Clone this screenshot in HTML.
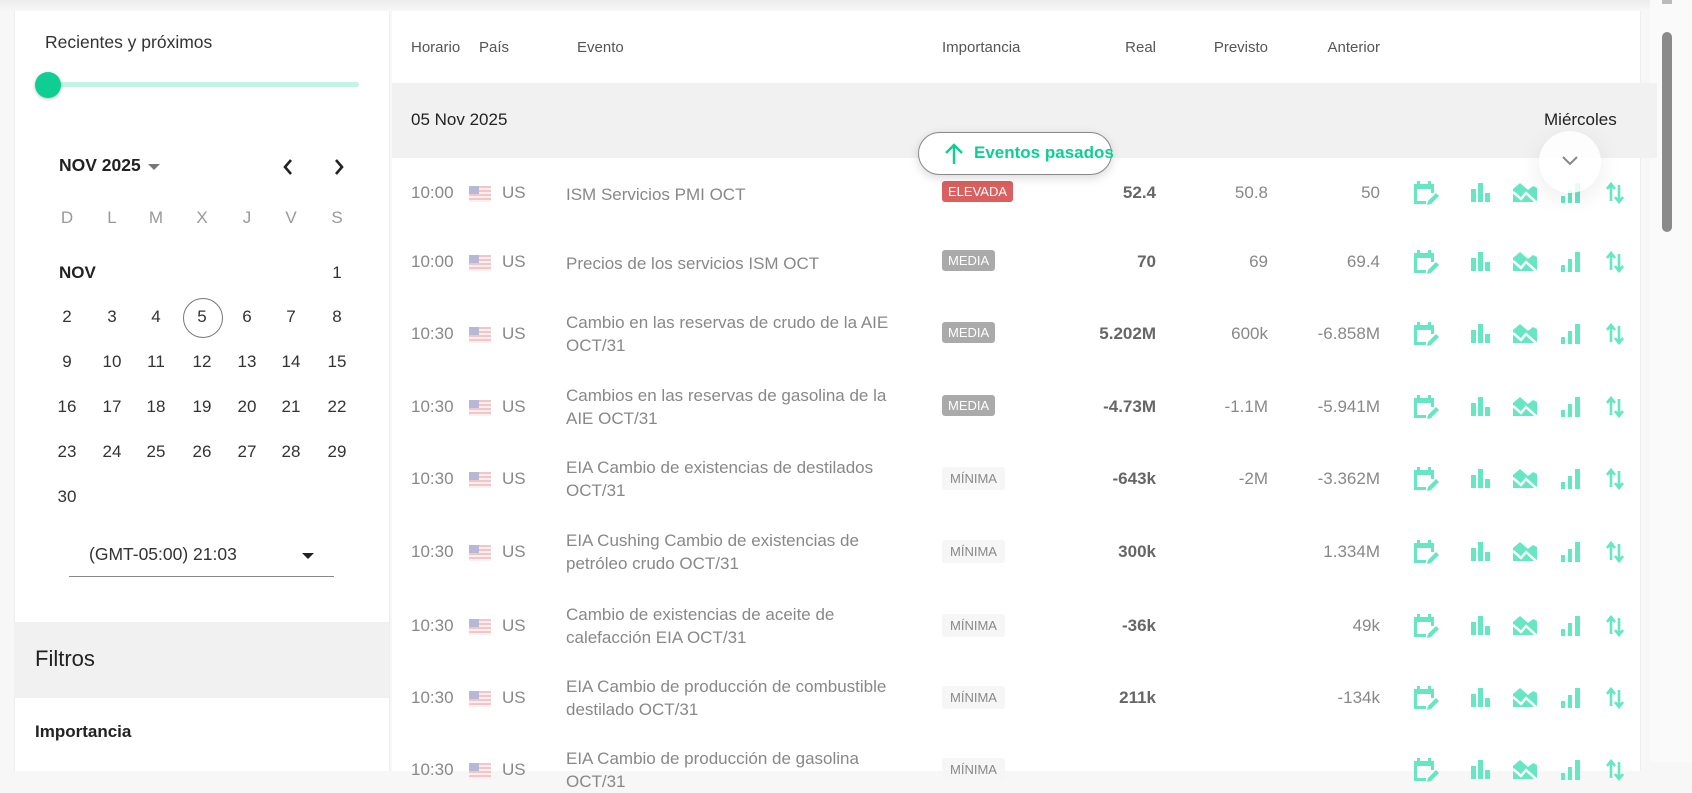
<!DOCTYPE html>
<html><head><meta charset="utf-8"><style>
*{margin:0;padding:0;box-sizing:border-box}
body{width:1692px;height:762px;overflow:hidden;background:#f7f7f7;font-family:"Liberation Sans",sans-serif;color:#333;position:relative}
.a{position:absolute;white-space:nowrap}
#left{position:absolute;left:14px;top:11px;width:376px;height:760px;background:#fff;border-left:1px solid #eee;border-right:1px solid #eee}
#main{position:absolute;left:392px;top:11px;width:1249px;height:760px;background:#fff;border-right:1px solid #eee}
.cal{font-size:17px;color:#333;width:40px;text-align:center}
.dh{color:#999}
.g{color:#888;font-size:17px}
.hd{font-size:15px;color:#555}
.badge{position:absolute;font-size:13px;padding:3px 6px;border-radius:3px;color:#fff;left:942px}
.r{text-align:right}
.ic{position:absolute}
</style></head><body>
<div class="a" style="left:0;top:0;width:1692px;height:11px;background:linear-gradient(#ececec,#f7f7f7)"></div>
<div id="left"></div>
<div id="main"></div>
<div class="a" style="left:1650px;top:0;width:42px;height:762px;background:#fafafa"></div>
<div class="a" style="left:1662px;top:32px;width:10px;height:200px;background:#8a8a8a;border-radius:5px"></div>
<div class="a" style="left:1662px;top:0;width:10px;height:4px;background:#bbb"></div>

<div class="a" style="left:45px;top:32px;font-size:17.5px;color:#333">Recientes y próximos</div>
<div class="a" style="left:47px;top:82px;width:312px;height:5px;background:#c3f3e5;border-radius:3px"></div>
<div class="a" style="left:35px;top:72px;width:26px;height:26px;border-radius:50%;background:#0fce94;box-shadow:0 1px 3px rgba(0,0,0,.25)"></div>
<div class="a" style="left:59px;top:155px;font-size:17.5px;font-weight:bold;color:#222">NOV 2025</div>
<div class="a" style="left:148px;top:164px;width:0;height:0;border-left:6px solid transparent;border-right:6px solid transparent;border-top:6px solid #777"></div>
<svg class="a" style="left:281px;top:158px" width="14" height="18"><path d="M10 2 L4 9 L10 16" stroke="#222" stroke-width="2.6" fill="none"/></svg>
<svg class="a" style="left:332px;top:158px" width="14" height="18"><path d="M4 2 L10 9 L4 16" stroke="#222" stroke-width="2.6" fill="none"/></svg>
<div id="cal"></div>
<div class="a" style="left:183px;top:298px;width:40px;height:40px;border:1px solid #777;border-radius:50%"></div>
<div class="a" style="left:89px;top:544px;font-size:17.5px;color:#333">(GMT-05:00) 21:03</div>
<div class="a" style="left:302px;top:553px;width:0;height:0;border-left:6px solid transparent;border-right:6px solid transparent;border-top:6px solid #222"></div>
<div class="a" style="left:69px;top:576px;width:265px;height:1px;background:#888"></div>
<div class="a" style="left:14px;top:622px;width:375px;height:76px;background:#f1f1f1"></div>
<div class="a" style="left:35px;top:646px;font-size:22px;color:#222">Filtros</div>
<div class="a" style="left:35px;top:722px;font-size:17px;font-weight:bold;color:#222">Importancia</div>

<div class="a hd" style="left:411px;top:39px">Horario</div>
<div class="a hd" style="left:479px;top:39px">País</div>
<div class="a hd" style="left:577px;top:39px">Evento</div>
<div class="a hd" style="left:942px;top:39px">Importancia</div>
<div class="a hd r" style="left:1056px;top:39px;width:100px">Real</div>
<div class="a hd r" style="left:1168px;top:39px;width:100px">Previsto</div>
<div class="a hd r" style="left:1280px;top:39px;width:100px">Anterior</div>
<div class="a" style="left:392px;top:83px;width:1265px;height:75px;background:#f1f1f1"></div>
<div class="a" style="left:411px;top:110px;font-size:17px;color:#222">05 Nov 2025</div>
<div class="a" style="left:1544px;top:110px;font-size:17px;color:#222">Miércoles</div>

<div id="rows"></div>

<div class="a" style="left:918px;top:132px;width:194px;height:43px;border:1px solid #888;border-radius:22px;background:#fff;box-shadow:0 3px 10px rgba(0,0,0,.15)"></div>
<svg class="a" style="left:943px;top:142px" width="22" height="24"><path d="M11 22 V3 M3 11 L11 3 L19 11" stroke="#0fce94" stroke-width="2.4" fill="none"/></svg>
<div class="a" style="left:974px;top:143px;font-size:17px;color:#0fce94;font-weight:bold">Eventos pasados</div>
<div class="a" style="left:1539px;top:131px;width:62px;height:62px;border-radius:50%;background:rgba(255,255,255,.85);box-shadow:0 6px 24px rgba(0,0,0,.08)"></div>
<svg class="a" style="left:1561px;top:155px" width="18" height="12"><path d="M2 2 L9 9 L16 2" stroke="#888" stroke-width="2" fill="none"/></svg>

<script>
var c=document.getElementById('cal'),h='';
var xs=[67,112,156,202,247,291,337];
['D','L','M','X','J','V','S'].forEach((d,i)=>h+=`<div class="a cal dh" style="left:${xs[i]-20}px;top:208px">${d}</div>`);
h+=`<div class="a" style="left:59px;top:263px;font-size:17px;font-weight:bold;color:#222">NOV</div><div class="a cal" style="left:${xs[6]-20}px;top:263px">1</div>`;
var ys=[307,352,397,442,487],n=2;
for(var r=0;r<5;r++)for(var i=0;i<7&&n<=30;i++){h+=`<div class="a cal" style="left:${xs[i]-20}px;top:${ys[r]}px">${n}</div>`;n++;}
c.innerHTML=h;
var rows=[
[193,'10:00','ISM Servicios PMI OCT','','E','52.4','50.8','50'],
[262,'10:00','Precios de los servicios ISM OCT','','M','70','69','69.4'],
[334,'10:30','Cambio en las reservas de crudo de la AIE','OCT/31','M','5.202M','600k','-6.858M'],
[407,'10:30','Cambios en las reservas de gasolina de la','AIE OCT/31','M','-4.73M','-1.1M','-5.941M'],
[479,'10:30','EIA Cambio de existencias de destilados','OCT/31','L','-643k','-2M','-3.362M'],
[552,'10:30','EIA Cushing Cambio de existencias de','petróleo crudo OCT/31','L','300k','','1.334M'],
[626,'10:30','Cambio de existencias de aceite de','calefacción EIA OCT/31','L','-36k','','49k'],
[698,'10:30','EIA Cambio de producción de combustible','destilado OCT/31','L','211k','','-134k'],
[770,'10:30','EIA Cambio de producción de gasolina','OCT/31','L','','','']];
var col='#66e6c3';
var icons=`
<svg class="ic" style="left:1411px;top:-14px" width="28" height="28" viewBox="0 0 28 28"><path d="M3 5h20v9h-3V10H6v12h9v3H3z M6 2h3v5H6z M17 2h3v5h-3z" fill="${col}"/><path d="M16 26l1-4 8-8 3 3-8 8z" fill="${col}"/></svg>
<svg class="ic" style="left:1471px;top:-10px" width="20" height="20"><rect x="0" y="6" width="5" height="13" fill="${col}"/><rect x="7" y="0" width="5" height="19" fill="${col}"/><rect x="14" y="10" width="5" height="9" fill="${col}"/></svg>
<svg class="ic" style="left:1513px;top:-11px" width="24" height="22"><path d="M0 7L7 1L15 8L20 4L24 6V20H0z" fill="${col}"/><path d="M0 10L8 17L13 11L24 21" stroke="#fff" stroke-width="2.5" fill="none"/></svg>
<svg class="ic" style="left:1561px;top:-11px" width="20" height="22"><rect x="0" y="14" width="4" height="7" fill="${col}"/><rect x="7" y="8" width="4" height="13" fill="${col}"/><rect x="14" y="1" width="5" height="20" fill="${col}"/></svg>
<svg class="ic" style="left:1606px;top:-12px" width="18" height="24"><path d="M5 20V4 M1 8L5 3L9 8 M13 4V21 M9 16L13 21L17 16" stroke="${col}" stroke-width="2.6" fill="none"/></svg>`;
var R='';
rows.forEach(r=>{var y=r[0];
R+=`<div class="a" style="left:0;top:${y}px;width:1650px;height:0">
<div class="a g" style="left:411px;top:-10px">${r[1]}</div>
<svg class="a" style="left:469px;top:-7px" width="22" height="16"><rect width="22" height="16" fill="#f2c6c8"/><rect y="2" width="22" height="2" fill="#fff" opacity=".7"/><rect y="6" width="22" height="2" fill="#fff" opacity=".7"/><rect y="10" width="22" height="2" fill="#fff" opacity=".7"/><rect y="14" width="22" height="2" fill="#fff" opacity=".7"/><rect width="10" height="8" fill="#b7b8d6"/></svg>
<div class="a g" style="left:502px;top:-10px">US</div>
<div class="a g" style="left:566px;top:${r[3]?-23:-10}px;line-height:23px">${r[2]}${r[3]?'<br>'+r[3]:''}</div>
${r[4]=='E'?'<div class="badge" style="top:-12px;background:#d9605e">ELEVADA</div>':r[4]=='M'?'<div class="badge" style="top:-12px;background:#aaa">MEDIA</div>':'<div class="badge" style="top:-12px;background:#f6f6f6;color:#888;padding:4px 8px">MÍNIMA</div>'}
<div class="a r" style="left:1056px;top:-10px;width:100px;font-size:17px;font-weight:bold;color:#666">${r[5]}</div>
<div class="a r g" style="left:1168px;top:-10px;width:100px">${r[6]}</div>
<div class="a r g" style="left:1280px;top:-10px;width:100px">${r[7]}</div>
${icons}</div>`;});
document.getElementById('rows').innerHTML=R;
</script>
</body></html>
